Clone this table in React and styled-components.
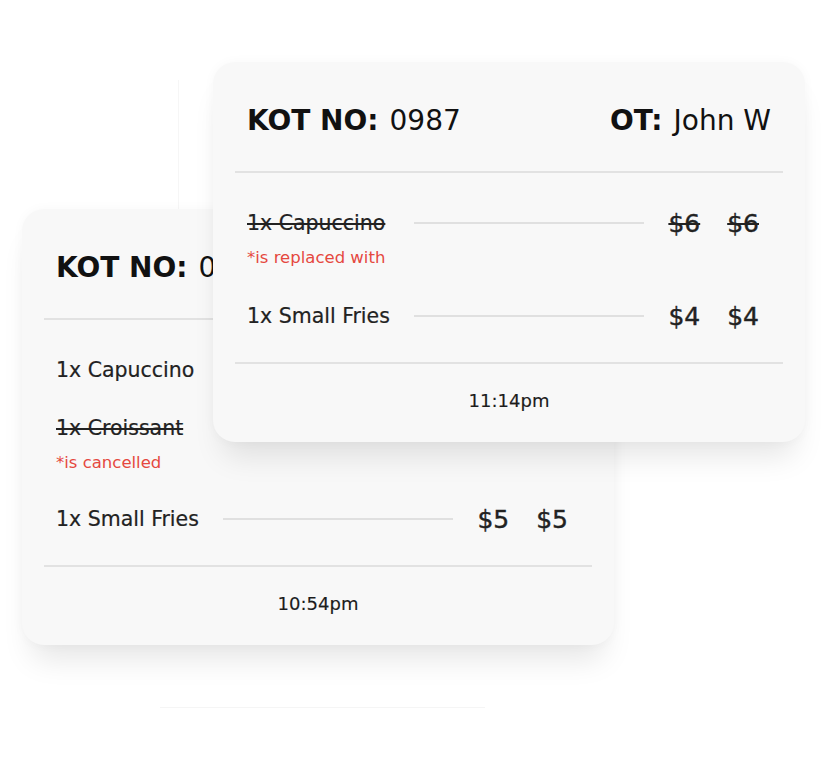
import React from 'react'
import styled, { createGlobalStyle } from 'styled-components'

const GlobalStyle = createGlobalStyle`
  body {
    margin: 0;
    background: #ffffff;
    font-family: "DejaVu Sans", "Liberation Sans", sans-serif;
    color: #1c1c1c;
  }
`

const Stage = styled.div`
  position: relative;
  width: 828px;
  height: 766px;
  overflow: hidden;
  background: #ffffff;
`

// faint guide lines behind the cards
const GuideV = styled.div`
  position: absolute;
  left: 178px;
  top: 80px;
  width: 1px;
  height: 370px;
  background: rgba(0, 0, 0, 0.035);
`

const GuideH = styled.div`
  position: absolute;
  left: 160px;
  top: 707px;
  width: 325px;
  height: 1px;
  background: rgba(0, 0, 0, 0.04);
`

const Card = styled.div`
  position: absolute;
  left: ${p => p.$x}px;
  top: ${p => p.$y}px;
  z-index: ${p => p.$z};
  width: 592px;
  box-sizing: border-box;
  padding: 0 22px;
  display: flex;
  flex-direction: column;
  background: #f8f8f8;
  border-radius: 22px;
  box-shadow: 0 24px 30px -10px rgba(0, 0, 0, 0.1), 0 0 12px rgba(0, 0, 0, 0.03);
`

const Header = styled.div`
  display: flex;
  justify-content: space-between;
  padding: 41px 12px 32px;
  font-size: 28px;
  line-height: 36px;
  color: #111;
  white-space: nowrap;
`

const Label = styled.span`
  font-weight: 700;
`

const Value = styled.span`
  font-weight: 400;
  margin-left: 11px;
`

const Divider = styled.div`
  height: 2px;
  background: #e2e2e2;
`

const Items = styled.div`
  display: flex;
  flex-direction: column;
  gap: ${p => p.$gap}px;
  padding: 38px 0 34px;
`

const Item = styled.div`
  display: flex;
  flex-direction: column;
`

const Row = styled.div`
  display: flex;
  align-items: center;
  height: 24px;
  padding: 0 24px 0 12px;
`

const Name = styled.span`
  width: 167px;
  flex: none;
  font-size: 20.5px;
  color: #222;
  -webkit-text-stroke: 0.2px #222;
  white-space: nowrap;
  text-decoration: ${p => (p.$struck ? 'line-through' : 'none')};
  text-decoration-thickness: 1.5px;
`

const Leader = styled.div`
  flex: 1;
  height: 2px;
  margin-right: 24px;
  background: #e0e0e0;
`

const Prices = styled.div`
  display: flex;
  gap: 27px;
  font-size: 25px;
  color: #222;
  -webkit-text-stroke: 0.4px #222;
  text-decoration: ${p => (p.$struck ? 'line-through' : 'none')};
  text-decoration-thickness: 1.5px;
`

const Note = styled.div`
  margin-top: 13px;
  padding-left: 12px;
  font-size: 16.5px;
  line-height: 20px;
  color: #e5483f;
`

const Footer = styled.div`
  padding: 26px 0 30px;
  text-align: center;
  font-size: 18px;
  line-height: 22px;
  color: #1c1c1c;
  -webkit-text-stroke: 0.15px #1c1c1c;
`

const tickets = [
  {
    id: 'back',
    x: 22,
    y: 209,
    z: 1,
    gap: 34,
    kot: '0986',
    ot: 'Mark S',
    time: '10:54pm',
    items: [
      { name: '1x Capuccino', price: '$6' },
      { name: '1x Croissant', struck: true, note: '*is cancelled' },
      { name: '1x Small Fries', price: '$5' },
    ],
  },
  {
    id: 'front',
    x: 213,
    y: 62,
    z: 2,
    gap: 36,
    kot: '0987',
    ot: 'John W',
    time: '11:14pm',
    items: [
      { name: '1x Capuccino', price: '$6', struck: true, note: '*is replaced with' },
      { name: '1x Small Fries', price: '$4' },
    ],
  },
]

const Ticket = ({ ticket }) => (
  <Card $x={ticket.x} $y={ticket.y} $z={ticket.z}>
    <Header>
      <div>
        <Label>KOT NO:</Label>
        <Value>{ticket.kot}</Value>
      </div>
      <div>
        <Label>OT:</Label>
        <Value>{ticket.ot}</Value>
      </div>
    </Header>
    <Divider />
    <Items $gap={ticket.gap}>
      {ticket.items.map(item => (
        <Item key={item.name}>
          <Row>
            <Name $struck={item.struck}>{item.name}</Name>
            <Leader />
            {item.price && (
              <Prices $struck={item.struck}>
                <span>{item.price}</span>
                <span>{item.price}</span>
              </Prices>
            )}
          </Row>
          {item.note && <Note>{item.note}</Note>}
        </Item>
      ))}
    </Items>
    <Divider />
    <Footer>{ticket.time}</Footer>
  </Card>
)

export default function App() {
  return (
    <Stage>
      <GlobalStyle />
      <GuideV />
      <GuideH />
      {tickets.map(t => (
        <Ticket key={t.id} ticket={t} />
      ))}
    </Stage>
  )
}
